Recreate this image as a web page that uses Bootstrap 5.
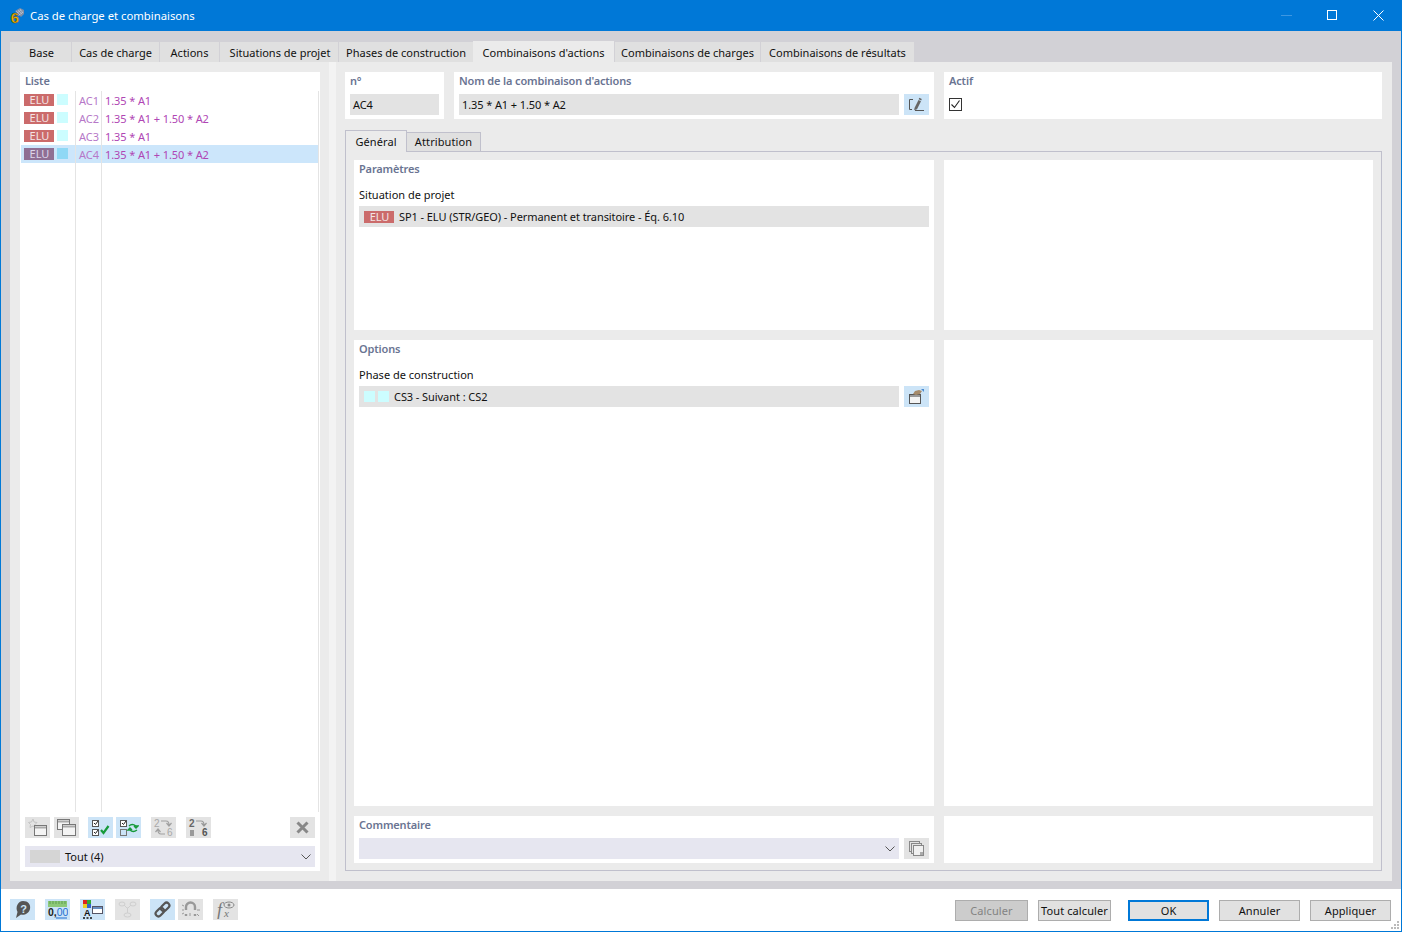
<!DOCTYPE html>
<html lang="fr"><head><meta charset="utf-8"><title>Cas de charge et combinaisons</title>
<link rel="stylesheet" href="https://cdn.jsdelivr.net/npm/bootstrap@5.3.0/dist/css/bootstrap.min.css">
<style>
html,body{height:100%;margin:0;overflow:hidden}
body{font-family:"Noto Sans","Open Sans",sans-serif;font-size:11px;line-height:15px;color:#111;background:#fff}
.dlg{width:1402px;height:932px;border:1px solid #0078d7;border-top:0}
.ttl{height:31px;background:#0078d7;color:#fff;font-size:11.3px;flex:none;padding-left:7px}
.ttl .tname{margin-left:5px}
.winbtns{margin-left:auto;padding-right:17px;gap:35px}
.mainarea{height:858px;background:#d2d1d6;padding:11px 9px 8px 9px;flex:none}
.toptabs{height:20px;flex:none;gap:1px}
.ttab{background:#e0e0e0;height:20px;padding-top:3px;text-align:center;white-space:nowrap}
.ttab.on{background:#ebebeb;height:21px;margin-top:-1px;padding-top:4px;margin-left:-1px}
.panelbg{height:819px;background:#ebebeb;padding:10px;gap:9px}
.splitter{width:7px;height:819px;margin:-10px 0;background:#f3f3f3;flex:none}
.leftpane{width:300px;height:799px;background:#fff;flex:none;padding:0 1px}
.lhead{color:#6a7492;font-weight:600;height:19px;padding:1px 4px 0 4px;letter-spacing:-.15px}
.listcols{height:721px;border-right:1px solid #e4e4e4}
.lcol{border-right:1px solid #e4e4e4}
.lc1{width:55px}.lc2{width:26px}.lc3{flex:1;border-right:0}
.lcell{height:18px;display:flex;align-items:center;color:#b046b4;white-space:nowrap}
.lcol .lcell.sel{background:#cce6fb}
.lc2 .lcell{padding-left:3px;color:#b678c8}
.lc3 .lcell{padding-left:3px;letter-spacing:-.1px}
.elu{display:inline-block;width:30px;height:12px;background:#cb6b6b;color:#f4e4e4;text-align:center;line-height:12px;font-size:11px;padding-left:1px}
.sel .elu{background:#8f6f94;color:#dcd6ea}
.swatch{display:inline-block;width:11px;height:11px;background:#ccfdff}
.sel .swatch{background:#8fd8f5}
.lc1 .lcell{padding-left:3px;gap:3px;padding-bottom:1px}
.ltools{height:21px;margin:5px 4px 0 4px}
.ibtn{width:25px;height:21px;flex:none;background:#e3e3e3;display:flex;align-items:center;justify-content:center;padding:0}
.ibtn.act{background:#cce4f7}
.ibtn svg{display:block}
.gap3{margin-left:3px}.gap4{margin-left:4px}.gap9{margin-left:9px}.gap10{margin-left:10px}
.cbo{height:21px;background:#e6e6f0;padding:0 5px;gap:5px}
.lcbo{margin:8px 4px 0 4px}
.chev{margin-left:auto;margin-right:-1px}
.rightpane{width:1037px;flex:none}
.hdrrow{gap:10px;height:47px;flex:none}
.wbox{background:#fff;padding:1px 5px 0 5px}
.wlab{color:#6a7492;font-weight:600;height:21px;letter-spacing:-.15px}
.nbox{width:99px}.namebox{width:480px}.actbox{width:438px}
.fld{height:21px;background:#e3e3e3;padding:0 3px;gap:5px;flex:1;white-space:nowrap;display:flex;align-items:center;letter-spacing:-.1px}
.fldrow{gap:5px}
.chk{width:13px;height:13px;border:1px solid #333;margin-top:4px;display:flex;align-items:center;justify-content:center}
.subtabs{height:21px;margin-top:11px;flex:none}
.stab{background:#e0e0e0;border:1px solid #c0c0cc;border-left:0;border-bottom:0;height:19px;margin-top:2px;width:74px;text-align:center;padding-top:1px;letter-spacing:.1px}
.stab.on{background:#ebebeb;border-left:1px solid #c0c0cc;height:22px;width:62px;margin-top:0;padding-top:3px;margin-bottom:-1px;position:relative;z-index:1}
.tabbody{height:720px;border:1px solid #c0c0cc;padding:8px;gap:10px;flex:none}
.secrow{gap:10px}
.sl{width:580px;background:#fff;padding:1px 5px 0 5px}
.sr{width:429px;background:#fff}
.h170{height:170px}.h466{height:466px}.h47{height:47px}
.flab{margin-top:6px;height:19px}
.seclab{height:20px}
.comlab{height:21px}
.sfld{height:21px;background:#e3e3e3;padding-left:5px;gap:5px;white-space:nowrap;letter-spacing:-.07px}
.swtight{margin-left:-2px}
.foot{height:42px;background:#fff;flex:none;padding:10px 10px 0 9px;position:relative}
.fbtns{margin-left:auto;margin-top:1px;height:21px}
.dbtn{height:21px;width:81px;background:#e1e1e1;border:1px solid #adadad;border-radius:0;padding:0;font-size:11px;line-height:17px;color:#111;letter-spacing:.1px}
.dbtn.dis{width:73px;background:#ccc;color:#838383;margin-right:10px}
.dbtn.all{width:73px;margin-right:17px}
.dbtn.okb{border:2px solid #0078d7;margin-right:10px}
.dbtn.ann{margin-right:10px}
.grip{position:absolute;right:1px;bottom:1px}
.swnone{width:30px;height:13px;background:#d5d5d5}
.t61{width:61px}.t87{width:87px}.t59{width:59px}.t118{width:118px}.t134{width:134px}.t141{width:141px}.t145{width:145px}.t153{width:153px}
.tbase{padding-left:2px}
</style></head>
<body>
<div class="dlg d-flex flex-column">
 <div class="ttl d-flex align-items-center">
  <svg width="17" height="22" viewBox="0 0 17 22"><path d="M7 6l5-3 4 2 0 4-3 3z" fill="#7f8ea6"/><path d="M8 6l4 4M10 5l4 4M12 4l3 4M8 9l5-4M10 11l5-4" stroke="#c4ccd8" stroke-width=".6"/><text x="7" y="18" text-anchor="middle" font-size="15" font-weight="700" font-family="Liberation Sans" fill="#f5b800" stroke="#5a4610" stroke-width=".5">6</text></svg>
  <span class="tname">Cas de charge et combinaisons</span>
  <div class="winbtns d-flex align-items-center">
   <svg width="11" height="11"><path d="M0 5.5h11" stroke="#3d97e2"/></svg>
   <svg width="11" height="11"><rect x=".5" y=".5" width="9" height="9" fill="none" stroke="#fff"/></svg>
   <svg width="11" height="11"><path d="M.5.5l10 10M10.5.5l-10 10" stroke="#fff"/></svg>
  </div>
 </div>
 <div class="mainarea d-flex flex-column">
  <div class="toptabs d-flex">
   <div class="ttab t61 tbase">Base</div><div class="ttab t87">Cas de charge</div><div class="ttab t59">Actions</div><div class="ttab t118 tbase">Situations de projet</div><div class="ttab t134">Phases de construction</div><div class="ttab on t141">Combinaisons d'actions</div><div class="ttab t145">Combinaisons de charges</div><div class="ttab t153">Combinaisons de résultats</div>
  </div>
  <div class="panelbg d-flex">
   <div class="leftpane d-flex flex-column">
    <div class="lhead">Liste</div>
    <div class="listcols d-flex">
     <div class="lcol lc1">
      <div class="lcell"><span class="elu">ELU</span><span class="swatch"></span></div>
      <div class="lcell"><span class="elu">ELU</span><span class="swatch"></span></div>
      <div class="lcell"><span class="elu">ELU</span><span class="swatch"></span></div>
      <div class="lcell sel"><span class="elu">ELU</span><span class="swatch"></span></div>
     </div>
     <div class="lcol lc2">
      <div class="lcell">AC1</div><div class="lcell">AC2</div><div class="lcell">AC3</div><div class="lcell sel">AC4</div>
     </div>
     <div class="lcol lc3">
      <div class="lcell">1.35 * A1</div><div class="lcell">1.35 * A1 + 1.50 * A2</div><div class="lcell">1.35 * A1</div><div class="lcell sel">1.35 * A1 + 1.50 * A2</div>
     </div>
    </div>
    <div class="ltools d-flex">
     <div class="ibtn"><svg width="21" height="19" viewBox="0 0 21 19"><path d="M6 1l1 3 3 .5-2 2 .5 3-2.500-1.500-3 1.500.5-3-2-2 3-.5z" fill="none" stroke="#c4c4c4"/><rect x="7.500" y="7.500" width="12" height="10" fill="#f4f4f4" stroke="#777"/><path d="M8 8.500h11v2H8z" fill="#aaa"/></svg></div>
     <div class="ibtn gap4"><svg width="21" height="19" viewBox="0 0 21 19"><rect x="1.500" y="1.500" width="12" height="10" fill="#f4f4f4" stroke="#777"/><path d="M2 2.500h11v2H2z" fill="#aaa"/><rect x="6.500" y="6.500" width="13" height="11" fill="#f4f4f4" stroke="#777"/><path d="M7 7.500h12v2H7z" fill="#aaa"/></svg></div>
     <div class="ibtn act gap9"><svg width="21" height="19" viewBox="0 0 21 19"><rect x="2.500" y="2.500" width="6" height="6" fill="#fff" stroke="#555"/><rect x="2.500" y="11.500" width="6" height="6" fill="#fff" stroke="#555"/><path d="M4 5l1.500 1.500L8 3M4 14l1.500 1.500L8 12" fill="none" stroke="#222"/><path d="M11 12l2.500 3 5-7" fill="none" stroke="#169a3a" stroke-width="2.200"/></svg></div>
     <div class="ibtn act gap3"><svg width="21" height="19" viewBox="0 0 21 19"><rect x="2.500" y="2.500" width="6" height="6" fill="#fff" stroke="#555"/><rect x="2.500" y="11.500" width="6" height="6" fill="none" stroke="#777"/><path d="M4 5l1.500 1.500L8 3" fill="none" stroke="#222"/><path d="M11 8q3-3 7 0h2l-2 2-2-2M19 12q-4 3-7 0h-2l2-2 2 2" fill="none" stroke="#169a3a" stroke-width="1.400"/></svg></div>
     <div class="ibtn gap10"><svg width="21" height="19" viewBox="0 0 21 19"><text x="1" y="9" font-size="10" font-family="Liberation Sans" fill="#a8a8a8">2</text><text x="14" y="18" font-size="10" font-family="Liberation Sans" fill="#a8a8a8">6</text><path d="M8 3h5q3 0 3 4m-2.500-2l2.500 3 2.500-3M12 16H8q-3 0-3-4m2.500 2L5 11l-2.500 3" fill="none" stroke="#a0a0a0" stroke-width="1.200"/></svg></div>
     <div class="ibtn gap10"><svg width="21" height="19" viewBox="0 0 21 19"><text x="1" y="9" font-size="10" font-weight="700" font-family="Liberation Sans" fill="#666">2</text><text x="14" y="18" font-size="10" font-weight="700" font-family="Liberation Sans" fill="#555">6</text><path d="M8 3h5q3 0 3 4m-2.500-2l2.500 3 2.500-3" fill="none" stroke="#999" stroke-width="1.200"/><rect x="2" y="12" width="4" height="6" fill="#999"/></svg></div>
     <div class="ibtn ms-auto"><svg width="13" height="13" viewBox="0 0 13 13"><path d="M1.500 1.500l10 10M11.500 1.500l-10 10" stroke="#888" stroke-width="3"/></svg></div>
    </div>
    <div class="cbo lcbo d-flex align-items-center">
     <span class="swnone"></span><span>Tout (4)</span>
     <svg class="chev" width="10" height="6"><path d="M.5.500l4.500 4.500 4.500-4.500" fill="none" stroke="#555"/></svg>
    </div>
   </div>
   <div class="splitter"></div>
   <div class="rightpane d-flex flex-column">
    <div class="hdrrow d-flex">
     <div class="wbox nbox"><div class="wlab">n°</div><div class="fld"><span>AC4</span></div></div>
     <div class="wbox namebox"><div class="wlab">Nom de la combinaison d'actions</div>
      <div class="d-flex fldrow"><div class="fld">1.35 * A1 + 1.50 * A2</div>
       <div class="ibtn act"><svg width="17" height="15" viewBox="0 0 17 15"><path d="M5 2.500H1.500v10H4" fill="none" stroke="#555"/><path d="M7 13.500h9" stroke="#555"/><path d="M6.500 11l4-8 2.500 1.200-4 8-2.800 1z" fill="#666"/><path d="M11 1.500l2.500 1.200" stroke="#666" stroke-width="1.500"/></svg></div></div>
     </div>
     <div class="wbox actbox"><div class="wlab">Actif</div><div class="chk"><svg width="11" height="11" viewBox="0 0 11 11"><path d="M1.500 5.500l3 3 5-7" fill="none" stroke="#222" stroke-width="1.100"/></svg></div></div>
    </div>
    <div class="subtabs d-flex"><div class="stab on">Général</div><div class="stab">Attribution</div></div>
    <div class="tabbody d-flex flex-column">
     <div class="secrow d-flex">
      <div class="sl h170"><div class="wlab seclab">Paramètres</div><div class="flab">Situation de projet</div>
       <div class="sfld d-flex align-items-center"><span class="elu">ELU</span><span>SP1 - ELU (STR/GEO) - Permanent et transitoire - Éq. 6.10</span></div></div>
      <div class="sr h170"></div>
     </div>
     <div class="secrow d-flex">
      <div class="sl h466"><div class="wlab seclab">Options</div><div class="flab">Phase de construction</div>
       <div class="d-flex fldrow"><div class="sfld flex-fill d-flex align-items-center"><span class="swatch"></span><span class="swatch swtight"></span><span>CS3 - Suivant : CS2</span></div>
        <div class="ibtn act"><svg width="17" height="17" viewBox="0 0 17 17"><rect x="1.500" y="6.500" width="11" height="9" fill="#f4f4f4" stroke="#555"/><path d="M2 7h10v2H2z" fill="#999"/><path d="M5 6l2-3 4-1 3 1-2 3-4 1z" fill="#a68b6b"/><path d="M13 1h3v3z" fill="#4a8ad0"/></svg></div></div></div>
      <div class="sr h466"></div>
     </div>
     <div class="secrow d-flex">
      <div class="sl h47"><div class="wlab comlab">Commentaire</div>
       <div class="d-flex fldrow"><div class="cbo flex-fill d-flex align-items-center"><svg class="chev" width="10" height="6"><path d="M.5.500l4.500 4.500 4.500-4.500" fill="none" stroke="#555"/></svg></div>
        <div class="ibtn"><svg width="17" height="17" viewBox="0 0 17 17"><rect x="1.500" y="1.500" width="10" height="10" fill="none" stroke="#888"/><rect x="3.500" y="3.500" width="10" height="10" fill="#e3e3e3" stroke="#888"/><rect x="5.500" y="5.500" width="10" height="10" fill="#f0f0f0" stroke="#888"/><path d="M12 12h3v3h-3z" fill="#aaa"/></svg></div></div></div>
      <div class="sr h47"></div>
     </div>
    </div>
   </div>
  </div>
 </div>
 <div class="foot d-flex">
  <div class="d-flex">
   <div class="ibtn act"><svg width="19" height="19" viewBox="0 0 19 19"><path d="M10 1c5 0 8 3.500 7 8s-6 6.500-9 5.500l-5 3.500 1.500-6C2 7 5 1 10 1z" fill="#555"/><text x="10.500" y="13" text-anchor="middle" font-size="11" font-weight="700" font-family="Liberation Sans" fill="#cce4f7">?</text></svg></div>
   <div class="ibtn act gap10"><svg width="21" height="19" viewBox="0 0 21 19"><rect x="1" y="1" width="19" height="6" fill="#8cc878"/><path d="M3 1v3M6 1v3M9 1v3M12 1v3M15 1v3M18 1v3" stroke="#5f9f50"/><text x="1" y="16" font-size="10.500" font-family="Liberation Sans"><tspan font-weight="700" fill="#222">0,</tspan><tspan fill="#1f6fd0">00</tspan></text><path d="M9 18h11" stroke="#1f6fd0"/></svg></div>
   <div class="ibtn act gap10"><svg width="21" height="19" viewBox="0 0 21 19"><rect x="1" y="0" width="4" height="4" fill="#d22"/><rect x="5" y="0" width="4" height="4" fill="#3a3"/><rect x="1" y="4" width="4" height="4" fill="#ec2"/><rect x="5" y="4" width="4" height="4" fill="#36c"/><text x="2" y="16" font-size="9" font-weight="700" font-family="Liberation Sans" fill="#111">A</text><path d="M1 18h2M4.500 18h2M8 18h2" stroke="#111" stroke-width="1.500"/><rect x="10.500" y="6.500" width="10" height="7" fill="#fff" stroke="#556"/><path d="M11 7h9v2h-9z" fill="#6a8fc0"/></svg></div>
   <div class="ibtn gap10"><svg width="19" height="17" viewBox="0 0 19 17"><ellipse cx="4" cy="3" rx="3" ry="2" fill="none" stroke="#cfcfcf"/><ellipse cx="15" cy="3" rx="3" ry="2" fill="none" stroke="#cfcfcf"/><ellipse cx="9.500" cy="14" rx="3.500" ry="2" fill="none" stroke="#cfcfcf"/><path d="M6 4l3 3h1l3-3M9.500 7v5" fill="none" stroke="#cfcfcf"/></svg></div>
   <div class="ibtn act gap10"><svg width="19" height="19" viewBox="0 0 19 19"><g fill="none" stroke="#555" stroke-width="2.200" transform="rotate(-45 9.500 9.500)"><rect x="1" y="6.700" width="9.500" height="5.600" rx="2.800"/><rect x="8.500" y="6.700" width="9.500" height="5.600" rx="2.800"/></g></svg></div>
   <div class="ibtn gap3"><svg width="19" height="17" viewBox="0 0 19 17"><path d="M5 15v-2M5 9V6a4.500 4.500 0 0 1 9 0v3M14 13v2" fill="none" stroke="#999" stroke-width="2.400"/><path d="M1 4l2 1M1 9h2M16 9h3M16 13l2 2M1 13l2-1M9 12v3" stroke="#999"/></svg></div>
   <div class="ibtn gap10"><svg width="19" height="19" viewBox="0 0 19 19"><text x="1" y="16" font-size="18" font-style="italic" font-family="Liberation Serif" fill="#777">f</text><text x="8" y="17" font-size="11" font-style="italic" font-family="Liberation Serif" fill="#777">x</text><ellipse cx="13" cy="5" rx="5" ry="3" fill="none" stroke="#888"/><circle cx="13" cy="5" r="1.500" fill="#888"/></svg></div>
  </div>
  <div class="fbtns d-flex">
   <button class="dbtn dis">Calculer</button><button class="dbtn all">Tout calculer</button><button class="dbtn okb">OK</button><button class="dbtn ann">Annuler</button><button class="dbtn">Appliquer</button>
  </div>
  <svg class="grip" width="10" height="10"><path d="M7 1h2v2H7zM4 4h2v2H4zM7 4h2v2H7zM1 7h2v2H1zM4 7h2v2H4zM7 7h2v2H7z" fill="#bbb"/></svg>
 </div>
</div>
<script src="https://cdn.jsdelivr.net/npm/bootstrap@5.3.0/dist/js/bootstrap.bundle.min.js"></script>
</body></html>
